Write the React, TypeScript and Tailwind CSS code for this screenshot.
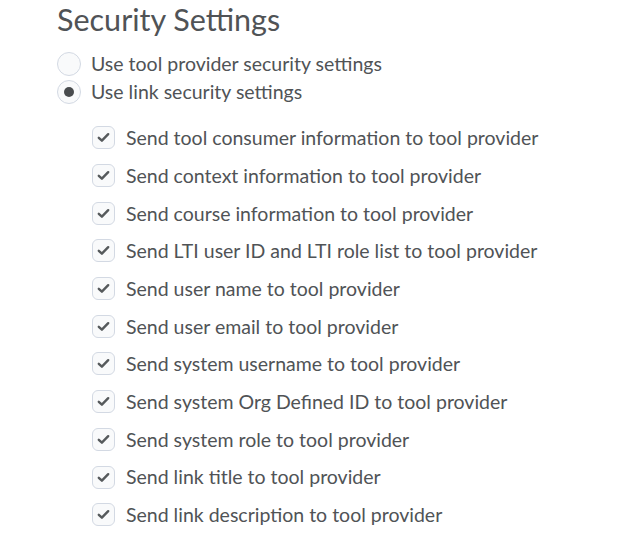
const options = [
  "Send tool consumer information to tool provider",
  "Send context information to tool provider",
  "Send course information to tool provider",
  "Send LTI user ID and LTI role list to tool provider",
  "Send user name to tool provider",
  "Send user email to tool provider",
  "Send system username to tool provider",
  "Send system Org Defined ID to tool provider",
  "Send system role to tool provider",
  "Send link title to tool provider",
  "Send link description to tool provider",
];

function Radio({ checked, label }: { checked?: boolean; label: string }) {
  return (
    <label className="flex h-[28px] items-center gap-[10px]">
      <span className="flex h-[24px] w-[24px] items-center justify-center rounded-full border border-[#d3d9e3] bg-[#f9fafb]">
        {checked && <span className="h-[10px] w-[10px] rounded-full bg-[#494c4e]" />}
      </span>
      <span>{label}</span>
    </label>
  );
}

function Checkbox({ label }: { label: string }) {
  return (
    <label className="flex h-[37.7px] items-center gap-[11px]">
      <span className="flex h-[23px] w-[23px] items-center justify-center rounded-[6px] border border-[#d3d9e3] bg-[#f9fafb]">
        <svg width="13" height="11" viewBox="0 0 13 11" fill="none">
          <path
            d="M1.8 5.8 L4.9 8.7 L11.2 2.2"
            stroke="#565a5c"
            strokeWidth="2.4"
            strokeLinecap="round"
            strokeLinejoin="round"
          />
        </svg>
      </span>
      <span>{label}</span>
    </label>
  );
}

export default function App() {
  return (
    <div className="min-h-[551px] bg-white pl-[57px] font-['Lato',sans-serif] text-[19.5px] text-[#505356]">
      <h2 className="pt-[0px] text-[30.5px] leading-[38px] font-normal">Security Settings</h2>
      <div className="mt-[12px] flex flex-col">
        <Radio label="Use tool provider security settings" />
        <Radio checked label="Use link security settings" />
      </div>
      <div className="mt-[13px] flex flex-col pl-[35px]">
        {options.map((option) => (
          <Checkbox key={option} label={option} />
        ))}
      </div>
    </div>
  );
}
